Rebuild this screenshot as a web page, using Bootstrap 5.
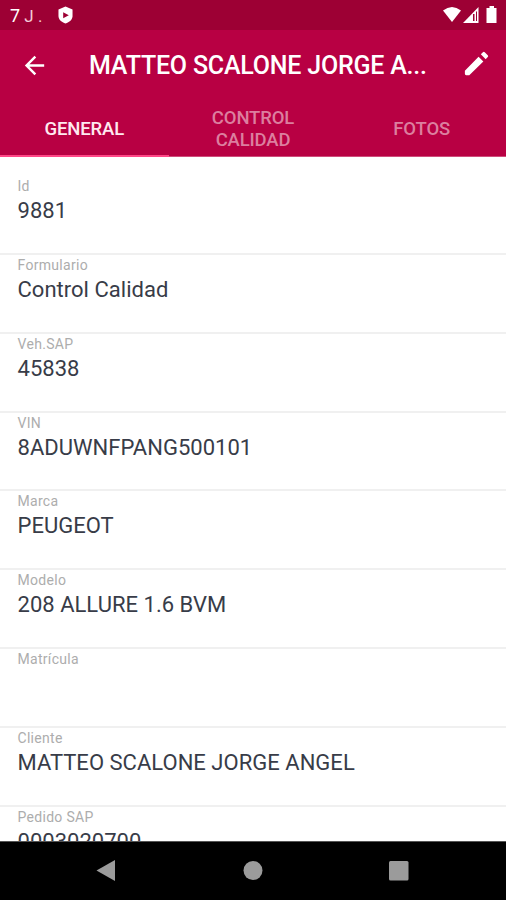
<!DOCTYPE html>
<html lang="es">
<head>
<meta charset="utf-8">
<meta name="viewport" content="width=device-width, initial-scale=1">
<title>Control Calidad</title>
<link rel="stylesheet" href="https://cdn.jsdelivr.net/npm/bootstrap@5.3.0/dist/css/bootstrap.min.css">
<style>
body{font-family:Roboto,"Liberation Sans",sans-serif;background:#fff}
.screen{width:506px;height:900px}
.status-bar{height:30px;background:#9d0034;padding:0 9px 0 10px}
.clock{font-size:17px;line-height:28px;padding-top:2px;white-space:pre;color:#f3cbd8}
.clock-day{font-size:18px;color:#fff}
.app-bar{height:70px;background:#b80043;padding:0 14px 0 20px}
.app-title{font-size:25px;font-weight:500;line-height:68px;padding-top:2px;margin-left:40px;white-space:nowrap;letter-spacing:-.21px}
.tab-strip{height:57px;background:#b80043}
.tab-strip .nav-link{color:#dc7f9f;font-size:18.5px;font-weight:500;line-height:22px;height:57px;padding:2px 0 0;border-radius:0;border-bottom:1px solid #cf4c7b;letter-spacing:-.15px}
.tab-strip .nav-link.active{color:#ffe9f0;border-bottom:2px solid #ff4787}
.record{height:78.8px;padding:1px 17.500px 0;border-bottom:2px solid #f0f0f0}
.record.first{height:98px;padding-top:20px}
.record-label{font-size:14px;line-height:18px;color:#adadad;letter-spacing:.3px}
.record-value{font-size:22px;line-height:27px;margin-top:2px;color:#383c48;white-space:nowrap;letter-spacing:.02px}
.nav-keys{height:59px;background:#000;border-top:1px solid #555}
</style>
<script src="https://cdn.jsdelivr.net/npm/bootstrap@5.3.0/dist/js/bootstrap.bundle.min.js"></script>
</head>
<body>
<div class="screen d-flex flex-column overflow-hidden">
  <header class="flex-shrink-0 text-white">
    <div class="status-bar d-flex align-items-center">
      <span class="clock"><span class="clock-day">7</span> J .</span>
      <svg class="ms-3" width="15" height="18" viewBox="0 0 16 18"><path d="M8 0 15.500 3v7c0 4-3.500 6.500-7.500 8-4-1.500-7.500-4-7.500-8V3z" fill="#fff"/><path d="M5.500 6v6.500l6-3.300z" fill="#9d0034"/></svg>
      <svg class="ms-auto" width="54" height="18" viewBox="0 0 54 18"><path d="M0 4.500Q9-2.500 18 4.500L9 16z" fill="#fff"/><path d="M20 17 35.500 1v16z" fill="#fff"/><path d="M30 8h1.500v7H30zM33 5.500h1v9.500h-1z" fill="#9d0034"/><path d="M44 2h2.500V0h4.500v2h2.500v15H43.500V2z" fill="#fff"/></svg>
    </div>
    <div class="app-bar d-flex align-items-center">
      <svg width="29" height="29" viewBox="0 0 24 24" fill="#fff"><path d="M20 11H7.830l5.590-5.590L12 4l-8 8 8 8 1.410-1.410L7.830 13H20z"/></svg>
      <span class="app-title">MATTEO SCALONE JORGE A...</span>
      <svg class="ms-auto mb-1" width="31" height="31" viewBox="0 0 24 24" fill="#fff"><path d="M3 17.600V20q0 1 1 1h2.400L17.300 10.400l-3.700-3.700zM20.710 7.040a1 1 0 0 0 0-1.410l-2.340-2.340a1 1 0 0 0-1.410 0l-1.600 1.600 3.750 3.750z"/></svg>
    </div>
    <nav class="tab-strip nav nav-fill flex-nowrap">
      <a class="nav-link active col-4 d-flex align-items-center justify-content-center" href="#">GENERAL</a>
      <a class="nav-link col-4 d-flex align-items-center justify-content-center" href="#">CONTROL<br>CALIDAD</a>
      <a class="nav-link col-4 d-flex align-items-center justify-content-center" href="#">FOTOS</a>
    </nav>
  </header>
  <main class="flex-grow-1 overflow-hidden">
    <div class="record first"><div class="record-label">Id</div><div class="record-value">9881</div></div>
    <div class="record"><div class="record-label">Formulario</div><div class="record-value">Control Calidad</div></div>
    <div class="record"><div class="record-label">Veh.SAP</div><div class="record-value">45838</div></div>
    <div class="record"><div class="record-label">VIN</div><div class="record-value">8ADUWNFPANG500101</div></div>
    <div class="record"><div class="record-label">Marca</div><div class="record-value">PEUGEOT</div></div>
    <div class="record"><div class="record-label">Modelo</div><div class="record-value">208 ALLURE 1.6 BVM</div></div>
    <div class="record"><div class="record-label">Matrícula</div><div class="record-value"></div></div>
    <div class="record"><div class="record-label">Cliente</div><div class="record-value">MATTEO SCALONE JORGE ANGEL</div></div>
    <div class="record"><div class="record-label">Pedido SAP</div><div class="record-value">0003020700</div></div>
  </main>
  <footer class="nav-keys flex-shrink-0">
    <svg class="d-block" width="506" height="58" viewBox="0 842 506 58" fill="#9b9b9b"><path d="M96.500 870.500 115 860v21z"/><circle cx="253" cy="870.500" r="9.500"/><rect x="389" y="861" width="19.500" height="19.500" rx="1.500"/></svg>
  </footer>
</div>
</body>
</html>
